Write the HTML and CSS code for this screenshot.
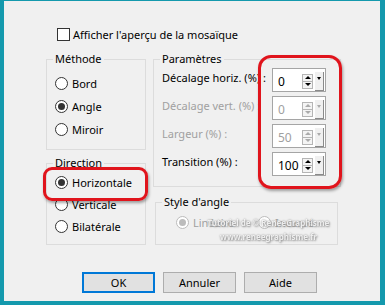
FILE: index.html
```html
<!DOCTYPE html>
<html>
<head>
	<title>Mosaïque</title>
	<link rel="stylesheet" href="styles.css">
</head>
<body>
<div class="dialog">
	<div class="preview"><span class="check"></span>Afficher l'aperçu de la mosaïque</div>

	<div class="main">
		<div class="col-left">
			<fieldset class="group">
				<legend>Méthode</legend>
				<div class="body method">
					<div class="opt"><span class="radio"></span>Bord</div>
					<div class="opt"><span class="radio on"></span>Angle</div>
					<div class="opt"><span class="radio"></span>Miroir</div>
				</div>
			</fieldset>
			<fieldset class="group">
				<legend>Direction</legend>
				<div class="body direction">
					<div class="opt"><span class="radio on"></span>Horizontale</div>
					<div class="opt"><span class="radio"></span>Verticale</div>
					<div class="opt"><span class="radio"></span>Bilatérale</div>
				</div>
			</fieldset>
		</div>

		<div class="col-right">
			<fieldset class="group params">
				<legend>Paramètres</legend>
				<div class="body params-body">
					<div class="param">
						<span class="plabel">Décalage horiz. (%) :</span>
						<div class="spin">
							<div class="spin-top">
								<span class="spin-val">0</span>
								<span class="spin-arrows"><span class="up"></span><span class="down"></span></span>
								<span class="spin-drop"></span>
							</div>
							<div class="spin-bar"><span style="width:28px"></span></div>
						</div>
					</div>
					<div class="param off">
						<span class="plabel">Décalage vert. (%) :</span>
						<div class="spin">
							<div class="spin-top">
								<span class="spin-val">0</span>
								<span class="spin-arrows"><span class="up"></span><span class="down"></span></span>
								<span class="spin-drop"></span>
							</div>
							<div class="spin-bar"><span style="width:28px"></span></div>
						</div>
					</div>
					<div class="param off">
						<span class="plabel">Largeur (%) :</span>
						<div class="spin">
							<div class="spin-top">
								<span class="spin-val">50</span>
								<span class="spin-arrows"><span class="up"></span><span class="down"></span></span>
								<span class="spin-drop"></span>
							</div>
							<div class="spin-bar"><span style="width:28px"></span></div>
						</div>
					</div>
					<div class="param">
						<span class="plabel">Transition (%) :</span>
						<div class="spin">
							<div class="spin-top">
								<span class="spin-val">100</span>
								<span class="spin-arrows"><span class="up"></span><span class="down"></span></span>
								<span class="spin-drop"></span>
							</div>
							<div class="spin-bar"><span style="width:100%"></span></div>
						</div>
					</div>
				</div>
			</fieldset>
			<fieldset class="group corner">
				<legend>Style d'angle</legend>
				<div class="body corner-body">
					<div class="opt off first"><span class="radio on"></span>Linéaire</div>
					<div class="opt off"><span class="radio"></span>Incurvé</div>
				</div>
				<div class="watermark">Tutoriel de © ReneeGraphisme<br>www.reneegraphisme.fr</div>
			</fieldset>
		</div>
	</div>

	<div class="buttons">
		<div class="btn default">OK</div>
		<div class="btn">Annuler</div>
		<div class="btn">Aide</div>
	</div>

	<div class="mark mark-params"></div>
	<div class="mark mark-dir"></div>
</div>
</body>
</html>
```

FILE: styles.css
```css
*{
	margin:0;
	padding:0;
}
body{
	font-family:"Noto Sans", "DejaVu Sans", sans-serif;
	font-size:11px;
	color:#000;
	background:#f0f0f0;
}
.dialog{
	position:relative;
	width:385px;
	height:305px;
	box-sizing:border-box;
	background:#f0f0f0;
	border:solid #1499ad;
	border-width:1px 5px 4px 4px;
}
.preview{
	display:flex;
	align-items:center;
	gap:3px;
	height:16px;
	padding:25px 0 0 53px;
}
.check{
	width:13px;
	height:13px;
	box-sizing:border-box;
	border:1px solid #333;
	background:#fff;
}
.main{
	display:flex;
	gap:7px;
	margin-top:9px;
	padding-left:42px;
}
.col-left{
	width:100px;
	display:flex;
	flex-direction:column;
	gap:5px;
}
.col-right{
	width:188px;
	display:flex;
	flex-direction:column;
	gap:7px;
}
.group{
	border:1px solid #dcdcdc;
	min-width:0;
	position:relative;
}
.group legend{
	margin-left:6px;
	padding:0 2px;
	line-height:16px;
}
.method{
	padding:5px 0 8px 8px;
}
.direction{
	padding:0 0 7px 8px;
}
.opt{
	display:flex;
	align-items:center;
	gap:4px;
	height:23px;
}
.direction .opt{
	height:22px;
}
.radio{
	width:13px;
	height:13px;
	box-sizing:border-box;
	border:1px solid #333;
	border-radius:50%;
	background:#fff;
	display:flex;
	align-items:center;
	justify-content:center;
}
.radio.on::after{
	content:"";
	width:7px;
	height:7px;
	border-radius:50%;
	background:#333;
}
.opt.off{
	color:#a0a0a0;
}
.opt.off .radio{
	border-color:#bcbcbc;
}
.opt.off .radio.on::after{
	background:#bcbcbc;
}

/* parametres */
.params-body{
	padding:1px 0 10px 8px;
}
.param{
	display:flex;
	align-items:center;
	height:24px;
	margin-bottom:4px;
}
.param:last-child{
	margin-bottom:0;
}
.plabel{
	width:110px;
	margin-top:-5px;
}
.param.off .plabel{
	color:#a0a0a0;
}
.spin{
	width:54px;
	height:24px;
	box-sizing:border-box;
	border:1px solid #a5a5a5;
	background:#fff;
	display:flex;
	flex-direction:column;
}
.spin-top{
	flex:1;
	display:flex;
	align-items:center;
	padding-top:2px;
}
.spin-val{
	flex:1;
	padding-left:5px;
	font-size:12px;
}
.param.off .spin-val{
	color:#a0a0a0;
}
.spin-arrows{
	width:11px;
	height:15px;
	display:flex;
	flex-direction:column;
	box-sizing:border-box;
	border:1px solid #b5b5b5;
	background:#f4f4f4;
}
.spin-arrows span{
	flex:1;
	display:flex;
	align-items:center;
	justify-content:center;
}
.spin-arrows .up{
	border-bottom:1px solid #b5b5b5;
}
.spin-arrows .up::after{
	content:"";
	border:solid transparent;
	border-width:0 3px 3px 3px;
	border-bottom-color:#000;
}
.spin-arrows .down::after{
	content:"";
	border:solid transparent;
	border-width:3px 3px 0 3px;
	border-top-color:#000;
}
.param.off .spin-arrows .up::after{
	border-bottom-color:#aaa;
}
.param.off .spin-arrows .down::after{
	border-top-color:#aaa;
}
.spin-drop{
	width:9px;
	height:19px;
	margin:0 1px 0 2px;
	align-self:flex-start;
	margin-top:1px;
	box-sizing:border-box;
	background:#f0f0f0;
	border-right:1px solid #8a8a8a;
	border-bottom:1px solid #8a8a8a;
	display:flex;
	justify-content:center;
	padding-top:5px;
}
.spin-drop::after{
	content:"";
	height:0;
	border:solid transparent;
	border-width:3px 2px 0 2px;
	border-top-color:#000;
}
.param.off .spin-drop::after{
	border-top-color:#aaa;
}
.spin-bar{
	height:3px;
	margin:0 0 2px 1px;
}
.spin-bar span{
	display:block;
	height:100%;
	background:#1c6ec0;
}

/* style d'angle */
.corner{
	width:183px;
	box-sizing:border-box;
	margin-left:2px;
}
.corner-body{
	display:flex;
	padding:1px 0 11px 20px;
}
.corner-body .opt{
	height:22px;
}
.corner-body .first{
	width:82px;
}
.watermark{
	position:absolute;
	left:35px;
	top:6px;
	width:155px;
	white-space:nowrap;
	text-align:center;
	font-size:8px;
	line-height:14px;
	font-weight:bold;
	color:rgba(255,255,255,0.8);
	text-shadow:0 0 2px #888, 1px 1px 2px #999;
	filter:blur(0.4px);
}

/* boutons */
.buttons{
	display:flex;
	gap:8px;
	margin-top:27px;
	padding-left:78px;
}
.btn{
	width:73px;
	height:21px;
	box-sizing:border-box;
	border:1px solid #adadad;
	background:#e1e1e1;
	display:flex;
	align-items:center;
	justify-content:center;
}
.btn.default{
	border:2px solid #0078d7;
}

/* cadres rouges */
.mark{
	position:absolute;
	box-sizing:border-box;
	border:3px solid #e0141c;
	border-radius:13px;
	box-shadow:1px 2px 3px rgba(0,0,0,0.35);
}
.mark-params{
	left:254px;
	top:54px;
	width:84px;
	height:134px;
}
.mark-dir{
	left:39px;
	top:166px;
	width:105px;
	height:34px;
	border-radius:9px;
}
```
